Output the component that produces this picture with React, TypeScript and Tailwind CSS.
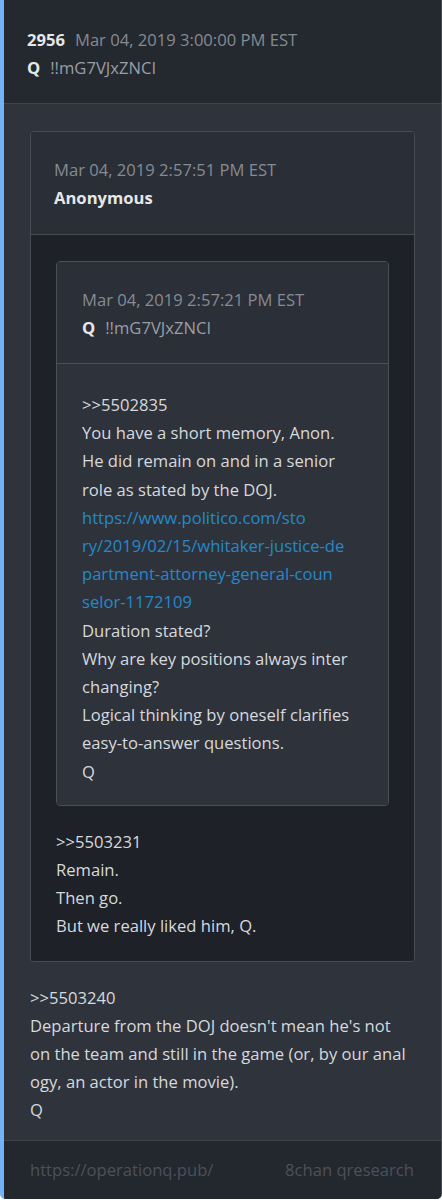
import React from 'react';

type Line = { text: string; link?: boolean };

function Lines({ lines }: { lines: Line[] }) {
  return (
    <div className="text-[16.6px] leading-[28.2px]">
      {lines.map((l, i) => (
        <div key={i} className={l.link ? 'whitespace-nowrap text-[#2589c9]' : 'whitespace-nowrap text-[#d6d9dd]'}>
          {l.text}
        </div>
      ))}
    </div>
  );
}

function PostHeader({ date, name, trip, num }: { date: string; name: string; trip?: string; num?: string }) {
  return (
    <div className="text-[16.6px] leading-7">
      <div className="flex items-baseline">
        {num && <span className="mr-[10px] font-bold text-[#e6e7e9]">{num}</span>}
        <span className="text-[#868b93]">{date}</span>
      </div>
      <div className="flex items-baseline">
        <span className="font-bold text-[#e6e7e9]">{name}</span>
        {trip && <span className="ml-[10px] text-[#9a9ea5]">{trip}</span>}
      </div>
    </div>
  );
}

const innerLines: Line[] = [
  { text: '>>5502835' },
  { text: 'You have a short memory, Anon.' },
  { text: 'He did remain on and in a senior' },
  { text: 'role as stated by the DOJ.' },
  { text: 'https://www.politico.com/sto', link: true },
  { text: 'ry/2019/02/15/whitaker-justice-de', link: true },
  { text: 'partment-attorney-general-coun', link: true },
  { text: 'selor-1172109', link: true },
  { text: 'Duration stated?' },
  { text: 'Why are key positions always inter' },
  { text: 'changing?' },
  { text: 'Logical thinking by oneself clarifies' },
  { text: 'easy-to-answer questions.' },
  { text: 'Q' },
];

const middleLines: Line[] = [
  { text: '>>5503231' },
  { text: 'Remain.' },
  { text: 'Then go.' },
  { text: 'But we really liked him, Q.' },
];

const outerLines: Line[] = [
  { text: '>>5503240' },
  { text: "Departure from the DOJ doesn't mean he's not" },
  { text: 'on the team and still in the game (or, by our anal' },
  { text: 'ogy, an actor in the movie).' },
  { text: 'Q' },
];

export default function App() {
  return (
    <div className="min-h-[1200px] bg-white font-['Open_Sans',sans-serif] text-[16px]">
      <div className="w-[442px] overflow-hidden rounded-b-[5px] border-l-4 border-r border-l-[#72b2f7] border-r-[#474c55] bg-[#2e333c]">
        {/* Post header */}
        <div className="border-b border-[#3e434c] bg-[#24282f] px-[23px] pt-[26px] pb-[21px]">
          <PostHeader num="2956" date="Mar 04, 2019 3:00:00 PM EST" name="Q" trip="!!mG7VJxZNCI" />
        </div>

        {/* Post body */}
        <div className="px-[26px] pt-[27px] pb-[15px]">
          {/* Quoted post */}
          <div className="overflow-hidden rounded-[4px] border border-[#464b54]">
            <div className="border-b border-[#464b54] bg-[#2a2e36] px-[23px] pt-[24px] pb-[22px]">
              <PostHeader date="Mar 04, 2019 2:57:51 PM EST" name="Anonymous" />
            </div>
            <div className="bg-[#1f2128] px-[25px] pt-[26px] pb-[20px]">
              {/* Nested quoted post */}
              <div className="overflow-hidden rounded-[4px] border border-[#4a4f58]">
                <div className="border-b border-[#4a4f58] bg-[#2b2f37] px-[25px] pt-[24px] pb-[21px]">
                  <PostHeader date="Mar 04, 2019 2:57:21 PM EST" name="Q" trip="!!mG7VJxZNCI" />
                </div>
                <div className="bg-[#2e323b] px-[25px] pt-[27px] pb-[19px]">
                  <Lines lines={innerLines} />
                </div>
              </div>
              <div className="mt-[22px]">
                <Lines lines={middleLines} />
              </div>
            </div>
          </div>

          <div className="mt-[22px]">
            <Lines lines={outerLines} />
          </div>
        </div>

        {/* Footer */}
        <div className="flex items-center justify-between border-t border-[#3e434c] bg-[#23272e] pr-[27px] pl-[26px] pt-[15px] pb-[15px] text-[16.6px] leading-7 text-[#4c5159]">
          <span>https://operationq.pub/</span>
          <span>8chan qresearch</span>
        </div>
      </div>
    </div>
  );
}
